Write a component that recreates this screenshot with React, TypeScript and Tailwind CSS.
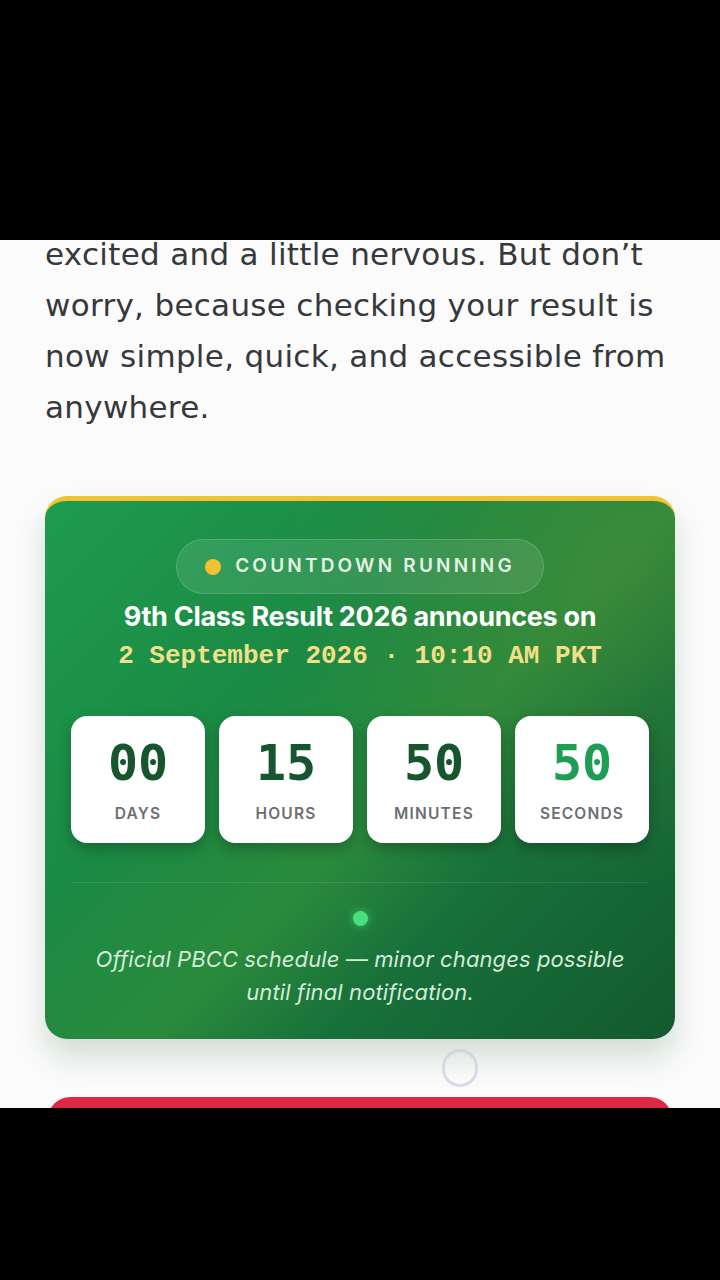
const units = [
  { value: "00", label: "DAYS", accent: false },
  { value: "15", label: "HOURS", accent: false },
  { value: "50", label: "MINUTES", accent: false },
  { value: "50", label: "SECONDS", accent: true },
];

function TimeBox({ value, label, accent }: { value: string; label: string; accent: boolean }) {
  return (
    <div className="flex h-[127px] flex-col items-center justify-center rounded-[16px] bg-white pt-[4px] shadow-[0_6px_14px_rgba(0,0,0,0.25)]">
      <span
        className={
          accent
            ? "font-['DejaVu_Sans_Mono',monospace] text-[50px] font-bold leading-none text-[#1f9d55]"
            : "font-['DejaVu_Sans_Mono',monospace] text-[50px] font-bold leading-none text-[#17552f]"
        }
      >
        {value}
      </span>
      <span className="mt-[14px] font-['Inter',sans-serif] text-[15.5px] font-semibold tracking-[1.2px] text-[#6b6e73]">
        {label}
      </span>
    </div>
  );
}

export default function App() {
  return (
    <div className="flex h-[1280px] w-[720px] flex-col bg-black">
      <div className="h-[240px] shrink-0" />
      <div className="relative h-[868px] shrink-0 overflow-hidden bg-[#fbfbfb]">
        <p className="mt-[-11px] whitespace-nowrap px-[45px] font-['DejaVu_Sans',sans-serif] text-[31px] leading-[51px] tracking-[0.3px] text-[#36383c]">
          excited and a little nervous. But don’t
          <br />
          worry, because checking your result is
          <br />
          now simple, quick, and accessible from
          <br />
          anywhere.
        </p>

        <div className="mx-[45px] mt-[63px] overflow-hidden rounded-[22px] border-t-[5px] border-[#f1c232] bg-[linear-gradient(135deg,#1e9b4e_0%,#1b8a44_35%,#2a8a3c_55%,#17703a_70%,#135a2e_100%)] shadow-[0_18px_30px_rgba(20,90,40,0.18)]">
          <div className="bg-[radial-gradient(circle_at_90%_10%,rgba(90,140,50,0.35),transparent_45%)] px-[26px] pb-[30px] pt-[38px]">
            <div className="flex flex-col items-center">
              <div className="flex h-[55px] w-[368px] items-center justify-center gap-[14px] rounded-full border border-white/15 bg-white/10">
                <span className="h-[16px] w-[16px] rounded-full bg-[#f2c230]" />
                <span className="font-['Inter',sans-serif] text-[19px] font-semibold tracking-[3.2px] text-[#e3f3e4]">
                  COUNTDOWN RUNNING
                </span>
              </div>
              <h2 className="mt-[4px] font-['Inter',sans-serif] text-[27px] font-bold leading-[38px] tracking-[-0.3px] text-white">
                9th Class Result 2026 announces on
              </h2>
              <p className="mt-[2px] font-['Liberation_Mono',monospace] text-[26px] font-bold leading-[36px] text-[#f2df8a]">
                2 September 2026 · 10:10 AM PKT
              </p>
            </div>

            <div className="mt-[42px] grid grid-cols-4 gap-[14px]">
              {units.map((u) => (
                <TimeBox key={u.label} value={u.value} label={u.label} accent={u.accent} />
              ))}
            </div>

            <div className="mt-[39px] h-px bg-white/10" />

            <div className="mt-[28px] flex justify-center">
              <span className="h-[15px] w-[15px] rounded-full bg-[#4ade80] shadow-[0_0_10px_rgba(74,222,128,0.7)]" />
            </div>

            <p className="mt-[17px] text-center font-['Inter',sans-serif] text-[22px] italic leading-[33px] tracking-[0.1px] text-[#d4ead8]">
              Official PBCC schedule — minor changes possible
              <br />
              until final notification.
            </p>
          </div>
        </div>

        <div className="mt-[10px] flex justify-center pl-[200px]">
          <span className="h-[38px] w-[36px] rounded-full border-[3px] border-[#c9cfe0]/70" />
        </div>

        <div className="absolute left-[48px] right-[48px] top-[857px] h-[40px] rounded-t-[22px] bg-[#dc2a46]" />
      </div>
    </div>
  );
}
